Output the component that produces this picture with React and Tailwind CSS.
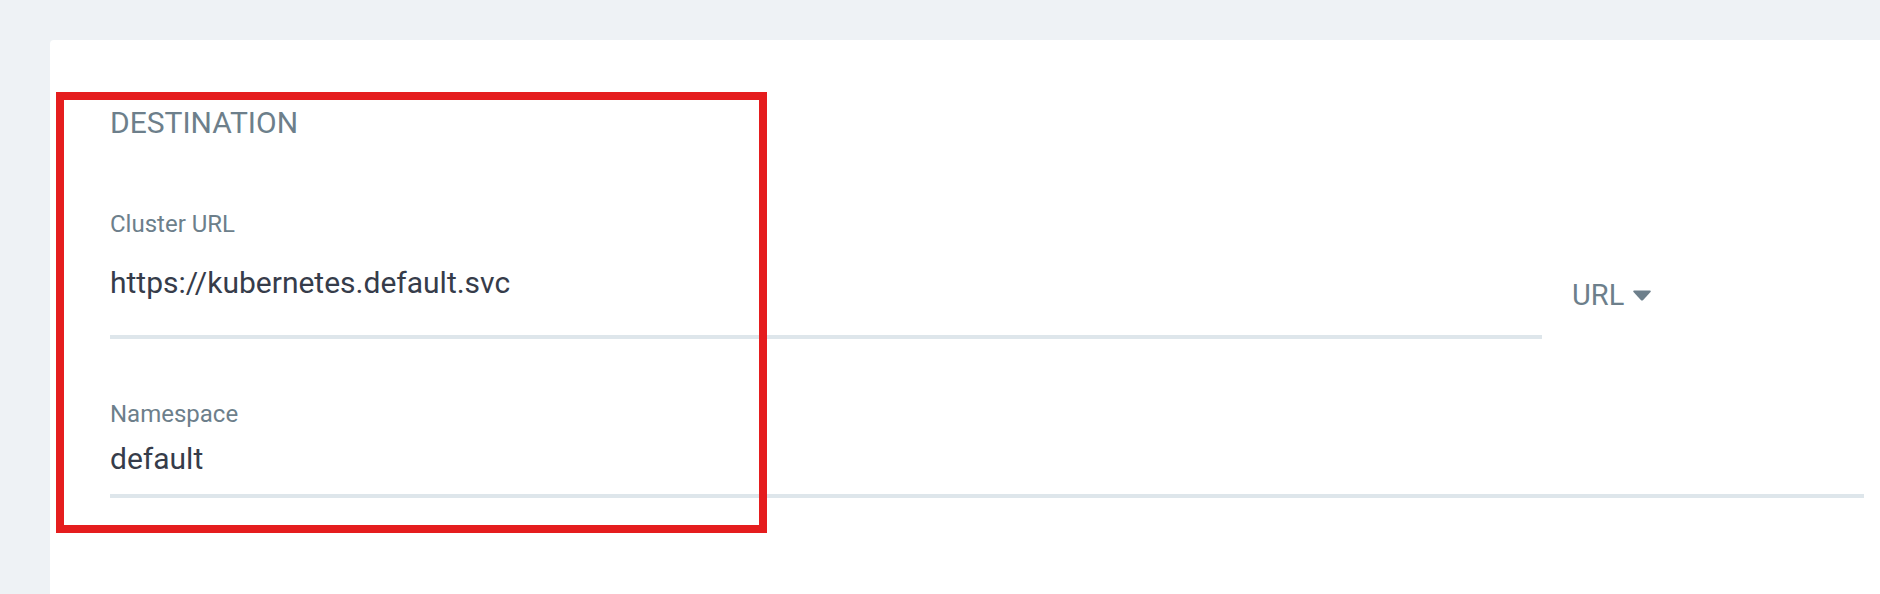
import React from "react";

export default function App() {
    return (
        <div className="h-[594px] overflow-hidden bg-[#eef2f5] pt-[40px] pl-[50px]" style={{ fontFamily: "Roboto, 'Liberation Sans', sans-serif" }}>
            <div className="relative h-full bg-white rounded-tl-[4px] pl-[60px] pr-[16px] pt-[65px]">
                {/* annotation box */}
                <div className="absolute left-[6px] top-[52px] w-[711px] h-[441px] border-[8px] border-[#e51d1e] pointer-events-none" />

                <h4 className="text-[30px] leading-[36px] text-[#6d7f8b] font-normal">DESTINATION</h4>

                {/* Cluster URL */}
                <div className="flex items-start mt-[68.5px]">
                    <div className="w-[1432px] border-b-[4px] border-[#dee6eb] pb-[34px]">
                        <label className="block text-[24px] leading-[28px] text-[#6d7f8b]">Cluster URL</label>
                        <div className="mt-[27.5px] text-[30px] leading-[36px] text-[#363c4a]">https://kubernetes.default.svc</div>
                    </div>
                    <div className="ml-[30px] mt-[68.5px] flex items-center gap-[8px] text-[29px] leading-[34px] text-[#6d7f8b]">
                        <span>URL</span>
                        <svg width="20" height="12" viewBox="0 0 20 12" className="mt-[2px]">
                            <path d="M2 0.5 H18 Q19.5 0.5 18.5 2 L11.2 10 Q10 11.2 8.8 10 L1.5 2 Q0.5 0.5 2 0.5 Z" fill="#6d7f8b" />
                        </svg>
                    </div>
                </div>

                {/* Namespace */}
                <div className="mt-[61px] border-b-[4px] border-[#dee6eb] pb-[17px]">
                    <label className="block text-[24px] leading-[28px] text-[#6d7f8b]">Namespace</label>
                    <div className="mt-[12.5px] text-[30px] leading-[36px] text-[#363c4a]">default</div>
                </div>
            </div>
        </div>
    );
}
